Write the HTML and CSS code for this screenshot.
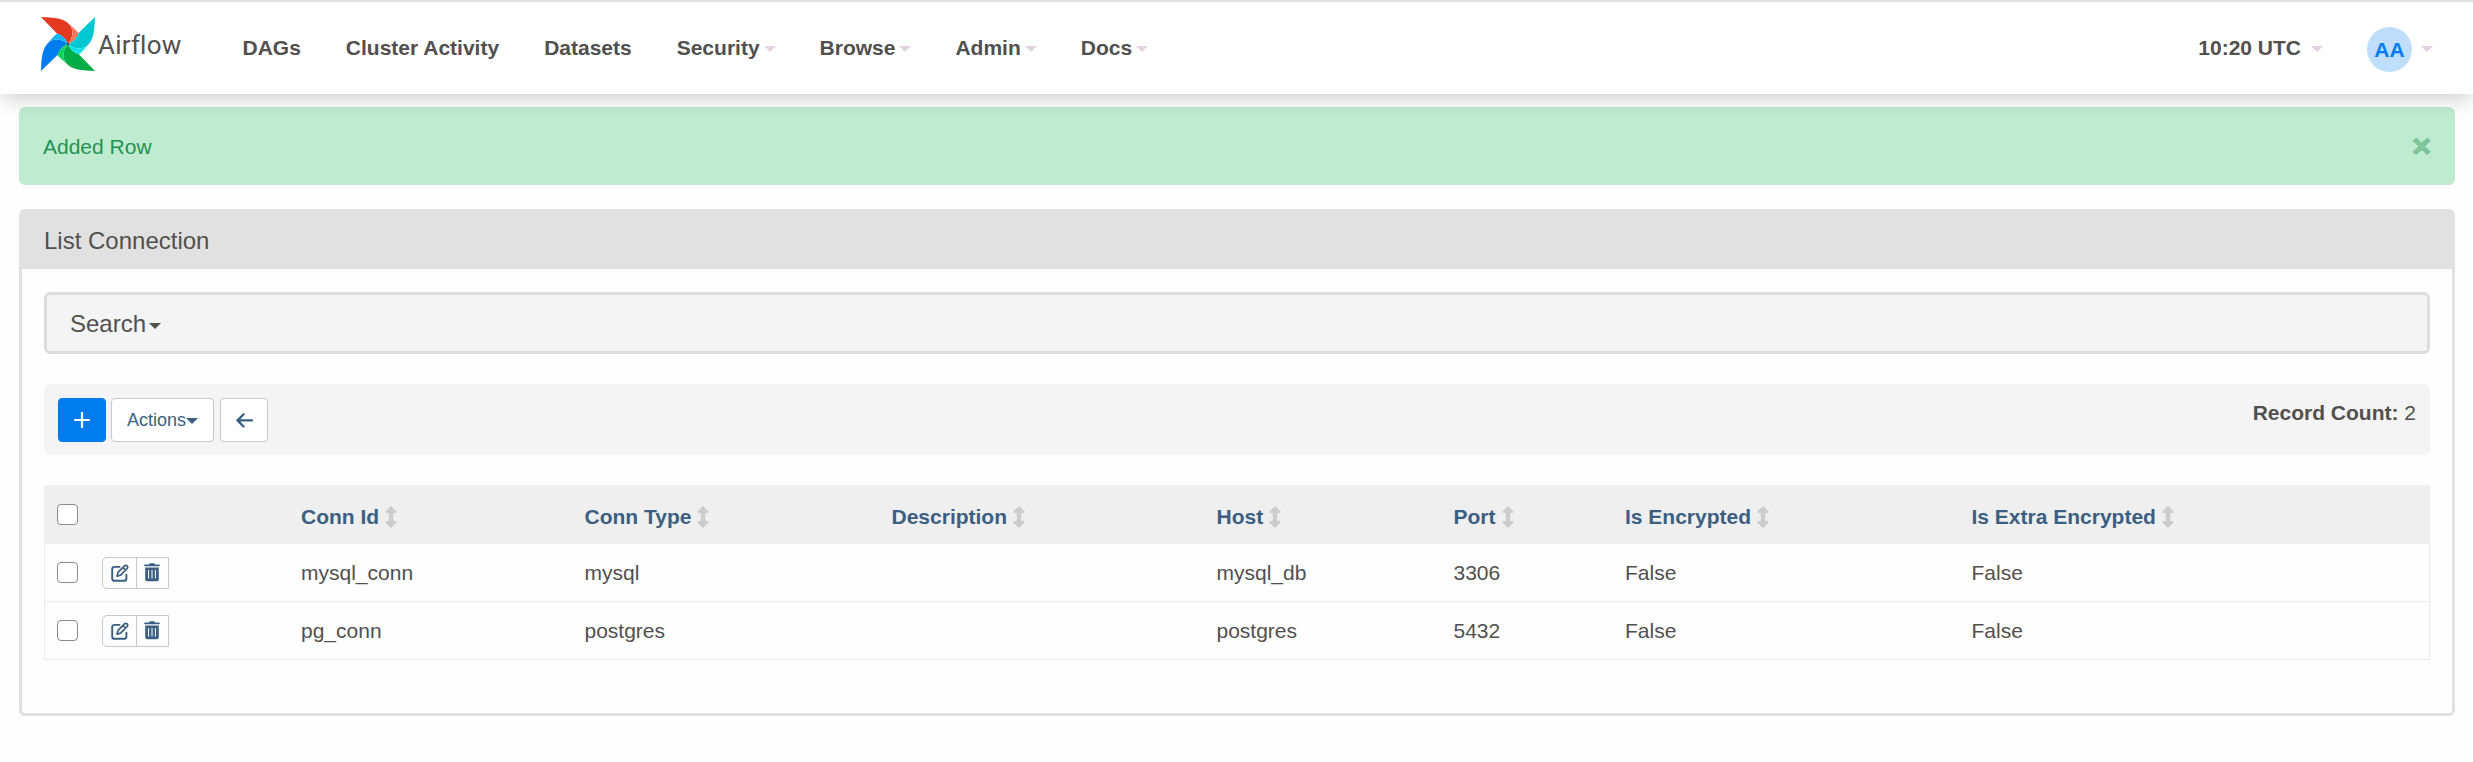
FILE: index.html
```
<!DOCTYPE html>
<html lang="en">
<head>
<meta charset="utf-8">
<title>List Connection - Airflow</title>
<link rel="stylesheet" href="styles.css">
</head>
<body>
<svg class="defs" width="0" height="0">
  <symbol id="edit" viewBox="0 0 18 18"><path d="M8.5 2.9H3.6Q1.2 2.9 1.2 5.2V14.4Q1.2 16.8 3.6 16.8H13Q15.4 16.8 15.4 14.4V10.6" fill="none" stroke="currentColor" stroke-width="1.9" stroke-linecap="round"/><path d="M6 12.2L7 8.4L13.5 1.9Q14.8 .7 16.1 1.9Q17.2 3.1 16.1 4.5L9.6 11.1Z M12.1 3.5L14.5 6" fill="none" stroke="currentColor" stroke-width="1.7" stroke-linejoin="round"/></symbol>
  <symbol id="trash" viewBox="0 0 16 19"><path d="M1 1.4H5L5.7 .3H10.3L11 1.4H15Q15.8 1.4 15.8 2.3T15 3.2H1Q.2 3.2 .2 2.3T1 1.4Z M1.2 4.6H14.8V16.2Q14.8 18.3 12.7 18.3H3.3Q1.2 18.3 1.2 16.2Z" fill="currentColor"/><path d="M4.6 7V15.5M8 7V15.5M11.4 7V15.5" stroke="#fff" stroke-width="1"/></symbol>
  <symbol id="sort" viewBox="0 0 12 22"><path d="M6 0L11.400 5.300Q12 6.800 10.600 7H8.300V15H10.600Q12 15.200 11.400 16.700L6 22L.6 16.700Q0 15.200 1.400 15H3.700V7H1.400Q0 6.800 .6 5.300Z" fill="#ccc"/></symbol>
</svg>
<header class="navbar">
  <a class="brand">
    <svg class="pinwheel" viewBox="-27 -27 54 54">
      <g><path fill="#e43921" d="M-27-27C-14-26.500-4-26 2-19C6-13 5-6 0 0C-2-5-5-8.500-11-10.500Z"/><path fill="#ff7557" d="M2-19C5-16.500 8-14 10.500-11C8.500-5 5-2 0 0C5-6 6-13 2-19Z"/></g>
      <g transform="rotate(90)"><path fill="#00c7d4" d="M-27-27C-14-26.500-4-26 2-19C6-13 5-6 0 0C-2-5-5-8.500-11-10.500Z"/><path fill="#11e1ee" d="M2-19C5-16.500 8-14 10.500-11C8.500-5 5-2 0 0C5-6 6-13 2-19Z"/></g>
      <g transform="rotate(180)"><path fill="#00ad46" d="M-27-27C-14-26.500-4-26 2-19C6-13 5-6 0 0C-2-5-5-8.500-11-10.500Z"/><path fill="#04d659" d="M2-19C5-16.500 8-14 10.500-11C8.500-5 5-2 0 0C5-6 6-13 2-19Z"/></g>
      <g transform="rotate(270)"><path fill="#017cee" d="M-27-27C-14-26.500-4-26 2-19C6-13 5-6 0 0C-2-5-5-8.500-11-10.500Z"/><path fill="#0cb6ff" d="M2-19C5-16.500 8-14 10.500-11C8.500-5 5-2 0 0C5-6 6-13 2-19Z"/></g>
      <circle r="1.3" fill="#51504f"/>
    </svg>
    <span class="wordmark">Airflow</span>
  </a>
  <nav class="menu">
    <a>DAGs</a><a>Cluster Activity</a><a>Datasets</a><a>Security<i class="caret"></i></a><a>Browse<i class="caret"></i></a><a>Admin<i class="caret"></i></a><a>Docs<i class="caret"></i></a>
  </nav>
  <div class="clock">10:20 UTC<i class="caret"></i></div>
  <div class="user"><span class="avatar">AA</span><i class="caret"></i></div>
</header>
<main class="content">
  <div class="alert"><span>Added Row</span><span class="close">×</span></div>
  <section class="panel">
    <h1 class="panel-title">List Connection</h1>
    <div class="panel-body">
      <div class="search">Search<i class="caret"></i></div>
      <div class="toolbar">
        <button class="btn btn-add"><svg width="16" height="16" viewBox="0 0 16 16"><path d="M8 1V15M1 8H15" stroke="#fff" stroke-width="2.2" stroke-linecap="round"/></svg></button>
        <button class="btn btn-actions">Actions<i class="caret"></i></button>
        <button class="btn btn-back"><svg width="17" height="15" viewBox="0 0 17 15"><path d="M7.600 1.300L1.500 7.400L7.600 13.500M1.800 7.400H16" fill="none" stroke="currentColor" stroke-width="2.300" stroke-linecap="round" stroke-linejoin="round"/></svg></button>
        <div class="count"><strong>Record Count:</strong> 2</div>
      </div>
      <table class="list">
        <colgroup><col class="c-check"><col class="c-tools"><col class="c-id"><col class="c-type"><col class="c-desc"><col class="c-host"><col class="c-port"><col class="c-enc"><col></colgroup>
        <thead><tr>
          <th><span class="check"></span></th><th></th>
          <th>Conn Id<svg class="sort"><use href="#sort"/></svg></th>
          <th>Conn Type<svg class="sort"><use href="#sort"/></svg></th>
          <th>Description<svg class="sort"><use href="#sort"/></svg></th>
          <th>Host<svg class="sort"><use href="#sort"/></svg></th>
          <th>Port<svg class="sort"><use href="#sort"/></svg></th>
          <th>Is Encrypted<svg class="sort"><use href="#sort"/></svg></th>
          <th>Is Extra Encrypted<svg class="sort"><use href="#sort"/></svg></th>
        </tr></thead>
        <tbody>
          <tr><td><span class="check"></span></td><td><div class="tools"><a class="edit"><svg width="18" height="18"><use href="#edit"/></svg></a><a class="trash"><svg width="16" height="19"><use href="#trash"/></svg></a></div></td><td>mysql_conn</td><td>mysql</td><td></td><td>mysql_db</td><td>3306</td><td>False</td><td>False</td></tr>
          <tr><td><span class="check"></span></td><td><div class="tools"><a class="edit"><svg width="18" height="18"><use href="#edit"/></svg></a><a class="trash"><svg width="16" height="19"><use href="#trash"/></svg></a></div></td><td>pg_conn</td><td>postgres</td><td></td><td>postgres</td><td>5432</td><td>False</td><td>False</td></tr>
        </tbody>
      </table>
    </div>
  </section>
</main>
</body>
</html>
```
FILE: styles.css
```
* { box-sizing: border-box; }
body {
  margin: 0;
  background: #fefefe;
  color: #51504f;
  font: 21px/30px "Liberation Sans", Arial, sans-serif;
}
.defs { position: absolute; }
.caret {
  display: inline-block;
  width: 0;
  height: 0;
  border: 6px solid transparent;
  border-top-color: currentColor;
  border-bottom: 0;
  vertical-align: middle;
}
.navbar {
  position: relative;
  z-index: 1;
  display: flex;
  align-items: flex-start;
  height: 94px;
  border-top: 2px solid #dfdfdf;
  background: #fff;
  box-shadow: 0 5px 20px -2px rgba(0, 0, 0, .22);
  font-weight: 700;
}
.navbar .caret { color: #e2d2e2; margin-left: 4px; }
.brand { display: flex; width: 220px; padding: 15px 0 0 41px; }
.pinwheel { width: 54px; height: 54px; }
.wordmark {
  margin: 13px 0 0 3px;
  font: 400 26px/30px Roboto, sans-serif;
  letter-spacing: .2px;
}
.menu { display: flex; flex: 1; padding-top: 31px; }
.menu a { padding: 0 22.500px; white-space: nowrap; }
.menu a:nth-child(n+5) { padding-left: 21.500px; }
.clock { padding-top: 31px; margin-right: 44px; white-space: nowrap; }
.clock .caret { margin-left: 10px; }
.user { display: flex; align-items: center; margin: 25px 40px 0 0; }
.user .caret { margin-left: 9px; margin-top: -2px; }
.avatar {
  width: 45px;
  height: 45px;
  border-radius: 50%;
  background: #bfdefb;
  color: #017cee;
  line-height: 45px;
  text-align: center;
}
.content { padding: 13px 18px 0 19px; }
.alert {
  display: flex;
  justify-content: space-between;
  height: 78px;
  padding: 25px 24px;
  border-radius: 6px;
  background: #bfebd0;
  color: #219451;
}
.close {
  color: #7dc69a;
  font-size: 32px;
  font-weight: 700;
  line-height: 28px;
  -webkit-text-stroke: 1.500px #7dc69a;
  text-shadow: 0 1.500px 0 #e5f8ed;
}
.panel {
  height: 507px;
  margin-top: 24px;
  border: 3px solid #e1e1e1;
  border-radius: 6px;
}
.panel-title {
  height: 57px;
  margin: 0;
  padding: 15px 22px 0;
  background: #e1e1e1;
  font-size: 24px;
  font-weight: 400;
  line-height: 28px;
}
.panel-body { padding: 23px 22px; }
.search {
  height: 62px;
  padding: 15px 23px 0;
  border: 3px solid #ddd;
  border-radius: 6px;
  background: #f4f4f4;
  font-size: 24px;
  line-height: 28px;
}
.search .caret { margin-left: 3px; }
.toolbar {
  display: flex;
  height: 71px;
  margin-top: 30px;
  padding: 14px 14px 0 14px;
  border-radius: 6px;
  background: #f4f4f4;
}
.btn {
  display: flex;
  align-items: center;
  justify-content: center;
  width: 48px;
  height: 44px;
  padding: 0;
  border: 1px solid #c8c8c8;
  border-radius: 4px;
  background: #fff;
  color: #3b5f82;
  font: 18px/27px "Liberation Sans", Arial, sans-serif;
}
.btn-add { border-color: #017cee; background: #017cee; }
.btn-actions { width: 103px; margin: 0 6px 0 5px; }
.btn-actions .caret { margin-top: 2px; }
.count { margin-left: auto; }
.list {
  width: 100%;
  margin-top: 30px;
  border-collapse: separate;
  border-spacing: 0;
  table-layout: fixed;
}
.c-check { width: 46px; }
.c-tools { width: 199px; }
.c-id { width: 283.500px; }
.c-type { width: 307px; }
.c-desc { width: 325px; }
.c-host { width: 237px; }
.c-port { width: 171.500px; }
.c-enc { width: 346.500px; }
.list th {
  height: 59px;
  padding: 4px 12px 0;
  background: #efefef;
  color: #3b5f82;
  text-align: left;
}
.list td { height: 58px; padding: 0 12px; border-bottom: 1px solid #ebebeb; }
.list td:first-child { border-left: 1px solid #ebebeb; }
.list td:last-child { border-right: 1px solid #ebebeb; }
.sort { width: 12px; height: 22px; margin: -2px 0 0 6px; vertical-align: middle; }
.check {
  display: block;
  width: 21px;
  height: 21px;
  margin-left: 1px;
  border: 1px solid #8a8a95;
  border-radius: 4px;
  background: #fff;
}
.list th .check { margin-top: -5px; }
.list td .check { margin-left: 0; }
.tools {
  display: flex;
  width: 67px;
  height: 32px;
  border: 1px solid #c8c8c8;
  border-radius: 5px 0 0 5px;
  color: #3b5f82;
}
.tools a { display: flex; align-items: center; justify-content: center; flex: 1; }
.tools .edit { flex: 0 0 34px; border-right: 1px solid #c8c8c8; }
.tools .trash { padding-right: 1px; }
```
